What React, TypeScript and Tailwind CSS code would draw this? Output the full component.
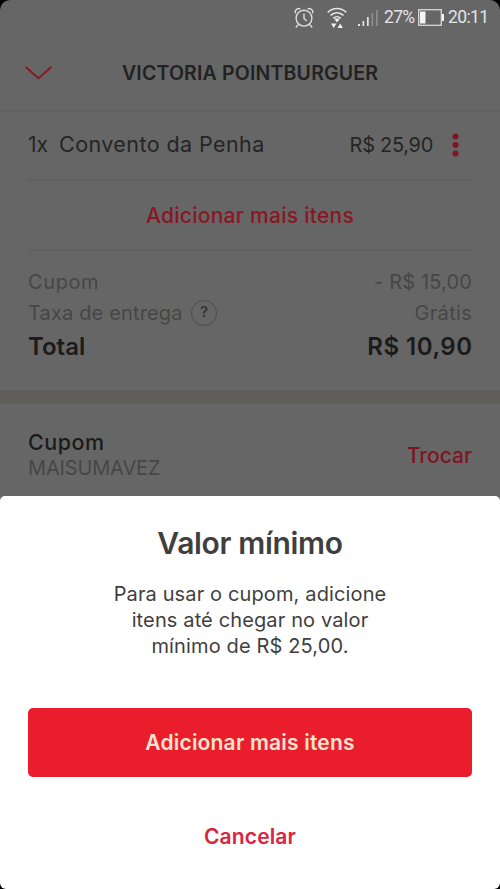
import React from 'react';

function StatusBar() {
  return (
    <div className="flex h-[35px] items-center justify-end pr-3 font-['Roboto',sans-serif] text-[17.5px] leading-none text-[#e4e4e4]">
      <svg className="mr-[13px]" width="20" height="22" viewBox="0 0 20 22" fill="none" stroke="#dcdcdc" strokeWidth="1.4">
        <circle cx="10" cy="11.2" r="7.9" />
        <path d="M10 6.5v5l2.8 2.6M4.6 17.2 1.8 20.5M15.4 17.2l2.8 3.3" />
        <path d="M1.600 6.400C.2 3.300 3.600.4 6.400 2.200M18.400 6.400C19.800 3.300 16.400.4 13.600 2.200" />
      </svg>
      <svg className="mr-[11px]" width="20" height="22" viewBox="0 0 20 22" fill="none" stroke="#e4e4e4" strokeWidth="1.5">
        <path d="M.8 5.400C6 .2 14 .2 19.200 5.400M3.500 8.400c3.700-3.700 9.300-3.700 13 0M6.200 11.200c2.200-2.100 5.400-2.100 7.600 0" />
        <g fill="#f0f0f0" stroke="none">
          <path d="M7 11.500h6l-3 4zM4 16.500h5.400l-2.700 4.500zM10.500 21h5.400l-2.700-4.500z" />
        </g>
      </svg>
      <svg className="mr-[6px]" width="20" height="19" viewBox="0 0 20 19">
        <path fill="#e4e4e4" d="M0 16h2v2H0zM4.500 13h1.700v5H4.500zM9 9h1.700v9H9z" />
        <path fill="#8c8c8c" d="M13.500 5h1.700v13h-1.700zM18 2h1.700v16H18z" />
      </svg>
      <span className="w-[30px] whitespace-nowrap tracking-[-0.7px]">27%</span>
      <svg className="mr-[4px] ml-[4px]" width="26" height="17" viewBox="0 0 26 17">
        <rect x=".7" y=".7" width="22.600" height="15.600" fill="none" stroke="#d8d8d8" strokeWidth="1.300" />
        <path fill="#f4f4f4" d="M2 2.500h5.500v12H2zM24 5h2v7h-2z" />
      </svg>
      <span className="w-[40px] whitespace-nowrap tracking-[-0.6px]">20:11</span>
    </div>
  );
}

function Header() {
  return (
    <header className="flex h-[77px] items-center border-b-2 border-[#616161] pl-[25px]">
      <svg width="27" height="14" viewBox="0 0 27 14" fill="none" stroke="#861c26" strokeWidth="2.200" strokeLinecap="round" strokeLinejoin="round">
        <path d="M1.300 1.500 13.500 12.300 25.700 1.500" />
      </svg>
      <h1 className="ml-[70px] pt-0.5 text-[19.500px] font-semibold tracking-[0.180px] whitespace-nowrap text-[#222]">VICTORIA POINTBURGUER</h1>
    </header>
  );
}

function Order() {
  return (
    <section className="px-7">
      <div className="flex h-[69px] items-center border-b-2 border-[#616161] pb-0.5 text-[#252525]">
        <span className="w-[31px] text-[21px]">1x</span>
        <span className="text-[21.500px] tracking-[0.420px] whitespace-nowrap">Convento da Penha</span>
        <span className="ml-auto text-[20px] tracking-[-0.300px] whitespace-nowrap">R$ 25,90</span>
        <svg className="mr-[13px] ml-[19px]" width="7" height="24" viewBox="0 0 7 24" fill="#801521">
          <circle cx="3.500" cy="3.500" r="3" />
          <circle cx="3.500" cy="12" r="3" />
          <circle cx="3.500" cy="20.500" r="3" />
        </svg>
      </div>
      <button className="flex h-[70px] w-full items-center justify-center border-b-2 border-[#616161] pt-0.5 text-[21px] font-medium tracking-[0.270px] whitespace-nowrap text-[#8a1622]">
        Adicionar mais itens
      </button>
      <div className="flex h-[139px] flex-col pt-[15px] text-[20px] text-[#464646]">
        <div className="flex h-[31px] items-center justify-between">
          <span className="tracking-[0.600px]">Cupom</span>
          <span className="tracking-[0.150px]">- R$ 15,00</span>
        </div>
        <div className="flex h-[31px] items-center">
          <span className="w-[154px] tracking-[0.150px] whitespace-nowrap">Taxa de entrega</span>
          <span className="ml-[9px] flex size-[26px] items-center justify-center rounded-full border-[1.500px] border-[#4e4e4e] text-[15px] font-semibold text-[#333]">?</span>
          <span className="ml-auto tracking-[0.300px]">Grátis</span>
        </div>
        <div className="flex h-[37px] items-center justify-between pt-px text-[24px] font-semibold text-[#1b1b1b]">
          <span>Total</span>
          <span className="-mr-[0.500px] tracking-[0.500px]">R$ 10,90</span>
        </div>
      </div>
    </section>
  );
}

function Coupon() {
  return (
    <section className="flex h-[106px] items-center justify-between border-t-[14px] border-[#605e5a] px-7 pt-[10px]">
      <div className="flex flex-col">
        <span className="text-[21.500px] leading-[26px] font-medium tracking-[0.500px] text-[#1b1b1b]">Cupom</span>
        <span className="text-[20px] leading-[26px] tracking-[-0.150px] text-[#464646]">MAISUMAVEZ</span>
      </div>
      <span className="pt-px text-[21px] font-medium text-[#801521]">Trocar</span>
    </section>
  );
}

function Sheet() {
  return (
    <section className="flex h-[393px] flex-col items-center rounded-t-[5px] rounded-b-[6px] bg-white px-7 pt-[28px]">
      <h2 className="text-[30px] leading-[38px] font-semibold tracking-[-0.330px] whitespace-nowrap text-[#3f3f3f]">Valor mínimo</h2>
      <p className="mt-[19px] flex flex-col items-center text-[20px] leading-[26px] tracking-[0.130px] whitespace-nowrap text-[#3f3f3f]">
        <span>Para usar o cupom, adicione</span>
        <span>itens até chegar no valor</span>
        <span>mínimo de R$ 25,00.</span>
      </p>
      <button className="mt-[49px] flex h-[69px] w-full shrink-0 items-center justify-center rounded-[5px] bg-[#ea1d2c] text-[21px] font-semibold tracking-[0.200px] whitespace-nowrap text-[#fbe3d0]">
        <span>Adicionar mais itens</span>
      </button>
      <button className="mt-[45px] text-[21px] leading-[30px] font-semibold tracking-[0.150px] text-[#d92540]">
        <span>Cancelar</span>
      </button>
    </section>
  );
}

export default function App() {
  return (
    <main className="h-[889px] w-[500px] overflow-hidden bg-black font-['Inter',sans-serif]">
      <div className="rounded-t-[10px] bg-[#666]">
        <StatusBar />
        <Header />
        <Order />
        <Coupon />
      </div>
      <div className="bg-[linear-gradient(#666_0_20px,#000_20px)]">
        <Sheet />
      </div>
    </main>
  );
}
